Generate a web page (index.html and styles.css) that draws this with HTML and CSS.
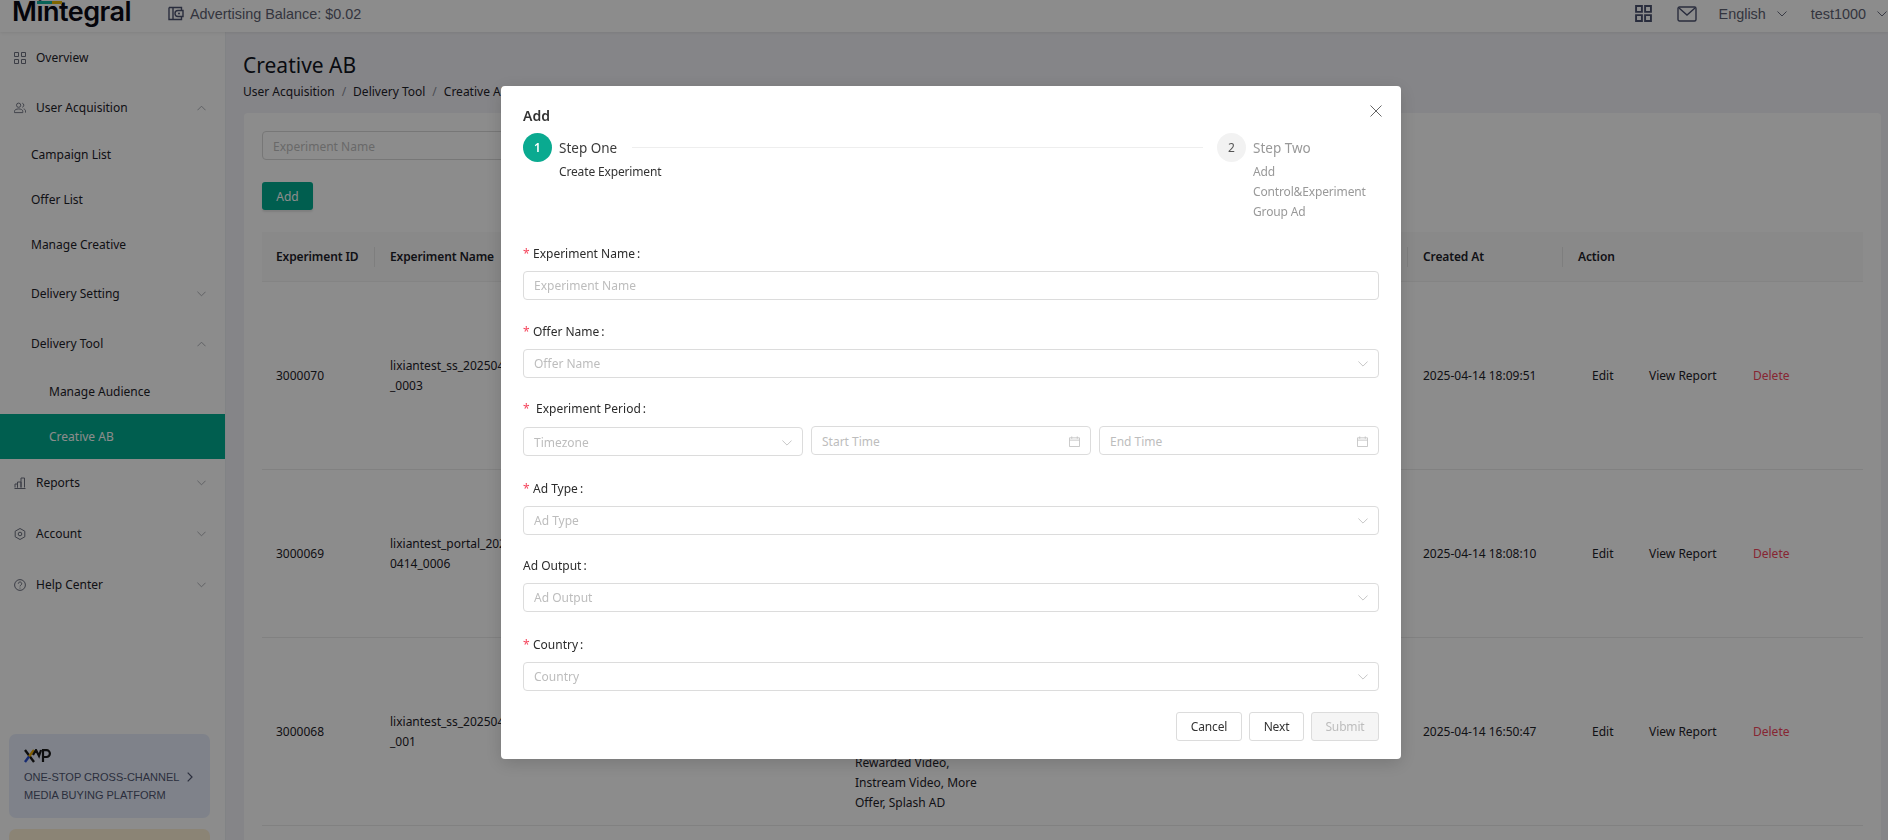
FILE: index.html
```html
<!DOCTYPE html>
<html lang="en">
<head>
<meta charset="utf-8">
<title>Creative AB</title>
<link rel="stylesheet" href="styles.css">
</head>
<body>
<div class="app">
  <header class="topbar">
    <div class="logo"><span class="logo-bars"><i class="bar-green"></i><i class="bar-yellow"></i></span>Mintegral</div>
    <div class="balance">
      <svg class="ico-wallet" viewBox="0 0 16 15" width="16" height="15"><path d="M1 1.500h12.500v3M1 1.500v12h12.500v-3M5 1.500v12M15 4.500H10a3 3 0 0 0 0 6h5z" fill="none" stroke="currentColor" stroke-width="1.400"/><circle cx="11" cy="7.500" r="1" fill="currentColor"/></svg>
      <span>Advertising Balance: $0.02</span>
    </div>
    <div class="topbar-right">
      <svg class="ico-grid" viewBox="0 0 16 16" width="17" height="17"><path d="M1 1h5.500v5.500H1zM9.500 1H15v5.500H9.500zM1 9.500h5.500V15H1zM9.500 9.500H15V15H9.500z" fill="none" stroke="currentColor" stroke-width="1.800"/></svg>
      <svg class="ico-mail" viewBox="0 0 20 16" width="20" height="16"><rect x="1" y="1" width="18" height="14" rx="1.500" fill="none" stroke="currentColor" stroke-width="1.400"/><path d="M2 2l8 7 8-7" fill="none" stroke="currentColor" stroke-width="1.400"/></svg>
      <span class="top-link lang">English<svg class="chev-top" viewBox="0 0 10 6" width="10" height="6"><path d="M.5.5 5 5 9.500.5" fill="none" stroke="currentColor"/></svg></span>
      <span class="top-link user">test1000<svg class="chev-top" viewBox="0 0 10 6" width="10" height="6"><path d="M.5.5 5 5 9.500.5" fill="none" stroke="currentColor"/></svg></span>
    </div>
  </header>

  <div class="body-row">
    <aside class="sidebar">
      <nav class="nav">
        <a class="nav-item top-item i-overview">
          <svg class="nav-ico" viewBox="0 0 12 12" width="12" height="12"><path d="M.5.500h4v4h-4zM7.500.500h4v4h-4zM.5 7.500h4v4h-4zM7.500 7.500h4v4h-4z" fill="none" stroke="currentColor"/></svg>Overview
        </a>
        <a class="nav-item top-item i-ua">
          <svg class="nav-ico" viewBox="0 0 13 12" width="13" height="12"><circle cx="5" cy="3" r="2.300" fill="none" stroke="currentColor"/><path d="M.5 11V9.500C.5 8 2.500 7 5 7s4.500 1 4.500 2.500V11zM9 .8a2.300 2.300 0 0 1 0 4.400M10.500 7c1.300.4 2 1.200 2 2.300V11" fill="none" stroke="currentColor"/></svg>User Acquisition
          <svg class="chev up" viewBox="0 0 10 6" width="9" height="6"><path d="M.5.5 5 5 9.500.5" fill="none" stroke="currentColor"/></svg>
        </a>
        <a class="nav-item sub-item i-campaign">Campaign List</a>
        <a class="nav-item sub-item i-offer">Offer List</a>
        <a class="nav-item sub-item i-creative">Manage Creative</a>
        <a class="nav-item sub-item i-dset">Delivery Setting
          <svg class="chev" viewBox="0 0 10 6" width="9" height="6"><path d="M.5.5 5 5 9.500.5" fill="none" stroke="currentColor"/></svg>
        </a>
        <a class="nav-item sub-item i-dtool">Delivery Tool
          <svg class="chev up" viewBox="0 0 10 6" width="9" height="6"><path d="M.5.5 5 5 9.500.5" fill="none" stroke="currentColor"/></svg>
        </a>
        <a class="nav-item deep-item i-aud">Manage Audience</a>
        <a class="nav-item deep-item active">Creative AB</a>
        <a class="nav-item top-item i-reports">
          <svg class="nav-ico" viewBox="0 0 12 12" width="12" height="12"><path d="M.5 11.500h11M1 10.500V7h2.500v3.500M3.500 10.500V5H7v5.500M7 10.500V1h3.500v9.500" fill="none" stroke="currentColor"/></svg>Reports
          <svg class="chev" viewBox="0 0 10 6" width="9" height="6"><path d="M.5.5 5 5 9.500.5" fill="none" stroke="currentColor"/></svg>
        </a>
        <a class="nav-item top-item i-account">
          <svg class="nav-ico" viewBox="0 0 12 12" width="12" height="12"><path d="M6 .5l4.800 2.700v5.600L6 11.500 1.200 8.800V3.200z" fill="none" stroke="currentColor"/><circle cx="6" cy="6" r="1.800" fill="none" stroke="currentColor"/></svg>Account
          <svg class="chev" viewBox="0 0 10 6" width="9" height="6"><path d="M.5.5 5 5 9.500.5" fill="none" stroke="currentColor"/></svg>
        </a>
        <a class="nav-item top-item i-help">
          <svg class="nav-ico" viewBox="0 0 12 12" width="12" height="12"><circle cx="6" cy="6" r="5.400" fill="none" stroke="currentColor"/><path d="M4.300 4.700a1.700 1.700 0 1 1 2.600 1.400c-.6.400-.9.700-.9 1.300" fill="none" stroke="currentColor"/><circle cx="6" cy="9" r=".6" fill="currentColor"/></svg>Help Center
          <svg class="chev" viewBox="0 0 10 6" width="9" height="6"><path d="M.5.5 5 5 9.500.5" fill="none" stroke="currentColor"/></svg>
        </a>
      </nav>
      <div class="promos">
        <div class="promo promo-xmp">
          <div class="xmp-logo"><svg viewBox="0 0 27 14" width="27" height="14"><path d="M1 1l9 12" stroke="#1a1a1a" stroke-width="2.400" fill="none"/><path d="M10 1 5 7.500" stroke="#e8a800" stroke-width="2.400" fill="none"/><path d="M5 7.500 1 13" stroke="#2a4fd0" stroke-width="2.400" fill="none"/><path d="M9 6l3-5 3 6 2-6M19 13V1.200h3.500a3.300 3.300 0 0 1 0 6.800H19" stroke="#1a1a1a" stroke-width="2.200" fill="none"/></svg></div>
          <div class="promo-line">ONE-STOP CROSS-CHANNEL<svg class="promo-arrow" viewBox="0 0 6 10" width="6" height="10"><path d="M.7.7 5 5 .7 9.300" fill="none" stroke="currentColor" stroke-width="1.200"/></svg></div>
          <div class="promo-line">MEDIA BUYING PLATFORM</div>
        </div>
        <div class="promo promo-tan"></div>
      </div>
    </aside>

    <main class="main">
      <h1 class="page-title">Creative AB</h1>
      <div class="crumbs"><span>User Acquisition</span><em>/</em><span>Delivery Tool</span><em>/</em><span>Creative AB</span></div>
      <section class="panel">
        <div class="filter">Experiment Name</div>
        <button class="btn-add">Add</button>
        <div class="table">
          <div class="row head">
            <div class="cell c-id">Experiment ID</div>
            <div class="cell c-name">Experiment Name</div>
            <div class="cell c-type">Ad Type</div>
            <div class="cell c-created">Created At</div>
            <div class="cell c-action">Action</div>
          </div>
          <div class="row r1">
            <div class="cell c-id">3000070</div>
            <div class="cell c-name">lixiantest_ss_20250414<br>_0003</div>
            <div class="cell c-type"></div>
            <div class="cell c-created">2025-04-14 18:09:51</div>
            <div class="cell c-action"><a class="act a-edit">Edit</a><a class="act a-view">View Report</a><a class="act a-del">Delete</a></div>
          </div>
          <div class="row r2">
            <div class="cell c-id">3000069</div>
            <div class="cell c-name">lixiantest_portal_2025<br>0414_0006</div>
            <div class="cell c-type"></div>
            <div class="cell c-created">2025-04-14 18:08:10</div>
            <div class="cell c-action"><a class="act a-edit">Edit</a><a class="act a-view">View Report</a><a class="act a-del">Delete</a></div>
          </div>
          <div class="row r3">
            <div class="cell c-id">3000068</div>
            <div class="cell c-name">lixiantest_ss_20250414<br>_001</div>
            <div class="cell c-type type-bottom">Rewarded Video,<br>Instream Video, More<br>Offer, Splash AD</div>
            <div class="cell c-created">2025-04-14 16:50:47</div>
            <div class="cell c-action"><a class="act a-edit">Edit</a><a class="act a-view">View Report</a><a class="act a-del">Delete</a></div>
          </div>
        </div>
      </section>
    </main>
  </div>
</div>

<div class="mask"></div>

<div class="modal">
  <button class="modal-close" aria-label="Close"><svg viewBox="0 0 12 12" width="12" height="12"><path d="M.5.500l11 11M11.500.500l-11 11" stroke="currentColor" fill="none"/></svg></button>
  <div class="modal-title">Add</div>
  <div class="steps">
    <div class="step step-one">
      <div class="step-dot on">1</div>
      <div class="step-body">
        <div class="step-head"><span class="step-name">Step One</span><span class="step-line"></span></div>
        <div class="step-desc">Create Experiment</div>
      </div>
    </div>
    <div class="step step-two">
      <div class="step-dot">2</div>
      <div class="step-body">
        <div class="step-name muted">Step Two</div>
        <div class="step-desc muted">Add<br>Control&amp;Experiment<br>Group Ad</div>
      </div>
    </div>
  </div>

  <div class="field f-name">
    <label class="lbl"><b class="req">*</b>Experiment Name<span class="colon">:</span></label>
    <div class="input">Experiment Name</div>
  </div>
  <div class="field f-offer">
    <label class="lbl"><b class="req">*</b>Offer Name<span class="colon">:</span></label>
    <div class="input select">Offer Name<svg class="sel-chev" viewBox="0 0 12 7" width="10" height="6"><path d="M.5.500 6 6 11.500.500" fill="none" stroke="currentColor"/></svg></div>
  </div>
  <div class="field f-period">
    <label class="lbl"><b class="req wide">*</b>Experiment Period<span class="colon">:</span></label>
    <div class="period">
      <div class="input select tz">Timezone<svg class="sel-chev" viewBox="0 0 12 7" width="10" height="6"><path d="M.5.500 6 6 11.500.500" fill="none" stroke="currentColor"/></svg></div>
      <div class="input date">Start Time<svg class="cal" viewBox="0 0 12 12" width="11" height="11"><path d="M.5 2h11v9.500H.5zM.5 4.500h11M3 .5v2.500M9 .5v2.500" fill="none" stroke="currentColor"/></svg></div>
      <div class="input date">End Time<svg class="cal" viewBox="0 0 12 12" width="11" height="11"><path d="M.5 2h11v9.500H.5zM.5 4.500h11M3 .5v2.500M9 .5v2.500" fill="none" stroke="currentColor"/></svg></div>
    </div>
  </div>
  <div class="field f-type">
    <label class="lbl"><b class="req">*</b>Ad Type<span class="colon">:</span></label>
    <div class="input select">Ad Type<svg class="sel-chev" viewBox="0 0 12 7" width="10" height="6"><path d="M.5.500 6 6 11.500.500" fill="none" stroke="currentColor"/></svg></div>
  </div>
  <div class="field f-output">
    <label class="lbl">Ad Output<span class="colon">:</span></label>
    <div class="input select">Ad Output<svg class="sel-chev" viewBox="0 0 12 7" width="10" height="6"><path d="M.5.500 6 6 11.500.500" fill="none" stroke="currentColor"/></svg></div>
  </div>
  <div class="field f-country">
    <label class="lbl"><b class="req">*</b>Country<span class="colon">:</span></label>
    <div class="input select">Country<svg class="sel-chev" viewBox="0 0 12 7" width="10" height="6"><path d="M.5.500 6 6 11.500.500" fill="none" stroke="currentColor"/></svg></div>
  </div>
  <div class="modal-foot">
    <button class="btn b-cancel">Cancel</button>
    <button class="btn b-next">Next</button>
    <button class="btn b-submit disabled">Submit</button>
  </div>
</div>
</body>
</html>
```

FILE: styles.css
```css
* { box-sizing: border-box; }
html, body { margin: 0; height: 100%; overflow: hidden; }
body { font-family: "Noto Sans", "Open Sans", sans-serif; font-size: 12px; color: #1d2129; background: #f3f3f8; }
a { color: inherit; text-decoration: none; }
button { font: inherit; }

.app { display: flex; flex-direction: column; height: 840px; }

/* top bar */
.topbar { height: 32px; flex: none; background: #fff; display: flex; align-items: center; position: relative; z-index: 2; box-shadow: 0 1px 3px rgba(0,0,0,.08); padding: 0 1px 5px 12px; }
.logo { font-family: Inter, "Liberation Sans", sans-serif; font-size: 27px; font-weight: 600; letter-spacing: -0.5px; color: #0a0a14; line-height: 24px; width: 156px; position: relative; align-self: flex-start; }
.logo-bars { position: absolute; left: 25px; top: 1px; display: flex; }
.logo-bars i { display: block; height: 3px; }
.bar-green { width: 15px; background: #12b5a0; }
.bar-yellow { width: 10px; background: #e8b800; }
.balance { display: flex; align-items: center; gap: 6px; font-family: "Liberation Sans", sans-serif; font-size: 14.4px; color: #5e6272; }
.ico-wallet { color: #4c5270; }
.topbar-right { margin-left: auto; display: flex; align-items: center; font-family: "Liberation Sans", sans-serif; font-size: 14.4px; color: #5e6272; }
.ico-grid { color: #4c5270; margin-right: 25px; }
.ico-mail { color: #4c5270; margin-right: 22px; }
.top-link { display: flex; align-items: center; }
.lang { margin-right: 24px; }
.chev-top { margin-left: 11px; color: #6a6e80; }

.body-row { flex: 1; display: flex; min-height: 0; }

/* sidebar */
.sidebar { width: 226px; flex: none; background: #fff; border-right: 1px solid #eceef2; display: flex; flex-direction: column; justify-content: space-between; overflow: hidden; }
.nav { display: flex; flex-direction: column; }
.nav-item { display: flex; align-items: center; height: 45px; font-size: 12px; color: #1d2129; padding-right: 19px; }
.top-item { padding-left: 14px; }
.sub-item { padding-left: 31px; }
.deep-item { padding-left: 49px; }
.nav-ico { width: 12px; height: 12px; color: #6d7180; margin-right: 10px; flex: none; }
.chev { margin-left: auto; color: #a5a8b0; }
.chev.up { transform: rotate(180deg); }
.active { background: #00ac90; color: #fff; }
.i-overview { margin-top: 3px; }
.i-ua { margin-top: 5px; }
.i-campaign { margin-top: 2px; }
.i-dset { margin-top: 4px; }
.i-dtool { margin-top: 5px; }
.i-aud { margin-top: 3px; }
.i-reports { margin-top: 1px; }
.i-account { margin-top: 6px; }
.i-help { margin-top: 6px; }
.promos { padding: 0 15px 0 9px; margin-bottom: -23px; display: flex; flex-direction: column; gap: 11px; }
.promo { border-radius: 7px; }
.promo-xmp { background: #e7edfb; height: 84px; padding: 15px 0 0 15px; font-family: "Liberation Sans", sans-serif; font-size: 11px; color: #4f5570; }
.promo-tan { background: #fdf0d6; height: 34px; }
.xmp-logo { height: 14px; margin-bottom: 5px; display: flex; }
.promo-line { display: flex; align-items: center; height: 18px; }
.promo-arrow { margin-left: 8px; color: #4f5570; }

/* main */
.main { flex: 1; min-width: 0; padding: 17px 7px 0 17px; }
.page-title { margin: 0; font-size: 21px; font-weight: 400; line-height: 32px; color: #111522; }
.crumbs { display: flex; align-items: center; font-size: 12px; line-height: 18px; color: #1d2129; margin-top: 2px; white-space: nowrap; }
.crumbs em { font-style: normal; color: #8a8d99; margin: 0 7px; }
.panel { margin: 12px 0 0 1px; background: #fff; border-radius: 4px; padding: 18px 18px 0; height: 760px; }
.filter { width: 320px; height: 29px; border: 1px solid #d9d9d9; border-radius: 4px; padding: 0 10px; font-size: 12px; color: #bfbfbf; line-height: 29px; }
.btn-add { display: block; margin-top: 22px; width: 51px; height: 28px; background: #00ac90; color: #fff; border: 0; border-radius: 3px; font-size: 12px; padding: 0; box-shadow: 0 2px 2px rgba(0,0,0,.1); }
.table { margin-top: 22px; }
.row { display: grid; grid-template-columns: 112px 467px 566px 155px 1fr; border-bottom: 1px solid #ebebeb; align-items: center; }
.row.head { height: 50px; background: #fafafa; font-weight: 600; letter-spacing: -0.12px; border-bottom: 1px solid #f0f0f0; }
.row.r1 { height: 188px; }
.row.r2 { height: 168px; }
.row.r3 { height: 188px; }
.cell { padding-left: 16px; line-height: 20px; color: #1d2129; }
.cell.c-id { padding-left: 14px; }
.row.head .c-name, .row.head .c-created, .row.head .c-action, .row.head .c-type { border-left: 1px solid #e6e6e6; padding: 0 0 0 15px; }
.cell.c-type { padding-left: 14px; }
.type-bottom { align-self: end; margin-bottom: 12px; }
.c-action { display: flex; padding-left: 30px; }
.act { display: block; }
.a-edit { width: 57px; }
.a-view { width: 104px; }
.a-del { color: #f5455c; }

/* mask + modal */
.mask { position: fixed; inset: 0; background: rgba(0,0,0,.45); z-index: 10; }
.modal { position: fixed; left: 501px; top: 86px; width: 900px; height: 673px; background: #fff; border-radius: 4px; z-index: 11; padding: 0 22px; box-shadow: 0 4px 18px rgba(0,0,0,.16); color: #2a2a2a; }
.modal-close { position: absolute; right: 18px; top: 18px; width: 14px; height: 14px; padding: 0; border: 0; background: none; color: #666; display: flex; align-items: center; justify-content: center; }
.modal-title { font-size: 14px; font-weight: 600; line-height: 20px; padding-top: 20px; height: 40px; color: #333; }
.steps { display: flex; height: 98px; margin-top: 7px; }
.step { display: flex; }
.step-one { flex: 1; }
.step-two { width: 162px; }
.step-dot { width: 29px; height: 29px; border-radius: 50%; background: #f2f2f2; color: #555; font-size: 12px; line-height: 29px; text-align: center; flex: none; margin-right: 7px; }
.step-dot.on { background: #0aaa90; color: #fff; font-weight: 600; }
.step-body { flex: 1; }
.step-head { display: flex; align-items: center; height: 29px; }
.step-name { font-size: 13.5px; line-height: 31px; height: 29px; color: #3c3c3c; }
.step-line { flex: 1; height: 1px; background: #eeeeee; margin: 0 14px 0 15px; }
.step-desc { font-size: 12px; line-height: 20px; color: #333; letter-spacing: -0.15px; }
.muted { color: #999; }
.field { display: flex; flex-direction: column; }
.lbl { display: flex; align-items: center; height: 20px; font-size: 12px; color: #2b2b2b; margin-bottom: 8px; }
.req { font-weight: 400; color: #f5455c; margin-right: 5px; font-size: 12px; width: 5px; }
.req.wide { margin-right: 8px; }
.colon { margin-left: 2px; }
.input { height: 29px; border: 1px solid #dcdcdc; border-radius: 4px; padding: 0 10px; color: #bdbdbd; font-size: 12px; line-height: 27px; display: flex; align-items: center; justify-content: space-between; background: #fff; }
.sel-chev { color: #bdbdbd; }
.f-name { margin-top: 12px; }
.f-offer { margin-top: 21px; }
.f-period { margin-top: 20px; }
.f-type { margin-top: 22px; }
.f-output { margin-top: 20px; }
.f-country { margin-top: 22px; }
.period { display: grid; grid-template-columns: 280px 280px 280px; gap: 8px; align-items: start; }
.period .input { padding-top: 2px; }
.cal { color: #c4c4c4; }
.tz { margin-top: 1px; }
.modal-foot { display: flex; justify-content: flex-end; gap: 7px; margin-top: 21px; }
.btn { height: 29px; padding: 0; border: 1px solid #dcdcdc; background: #fff; border-radius: 3px; font-size: 12px; color: #333; letter-spacing: -0.15px; }
.b-cancel { width: 66px; }
.b-next { width: 55px; }
.b-submit { width: 68px; }
.btn.disabled { background: #f5f5f5; color: #bdbdbd; }
```
